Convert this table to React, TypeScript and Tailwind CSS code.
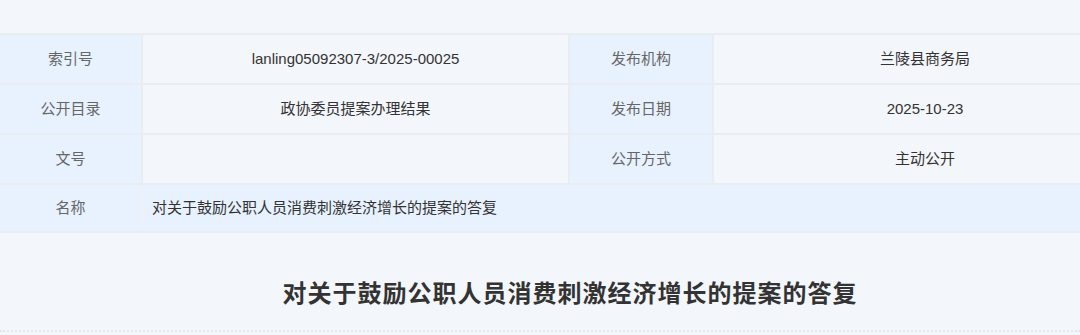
const font = "font-['Liberation_Sans','Noto_Sans_CJK_SC',sans-serif]"

type Cell = { label: string; value: string }

const rows: [Cell, Cell][] = [
  [
    { label: "索引号", value: "lanling05092307-3/2025-00025" },
    { label: "发布机构", value: "兰陵县商务局" },
  ],
  [
    { label: "公开目录", value: "政协委员提案办理结果" },
    { label: "发布日期", value: "2025-10-23" },
  ],
  [
    { label: "文号", value: "" },
    { label: "公开方式", value: "主动公开" },
  ],
]

export default function App() {
  const title = "对关于鼓励公职人员消费刺激经济增长的提案的答复"
  return (
    <div className={`w-[1080px] h-[335px] overflow-hidden bg-[#f3f6fa] pt-[33px] ${font}`}>
      {/* info table */}
      <div className="border-t-2 border-[#e9ecf0] text-[15px]">
        {rows.map(([a, b], i) => (
          <div
            key={i}
            className="grid grid-cols-[143px_427px_144px_1fr] h-[50px] border-b-2 border-[#e9ecf0]"
          >
            <div className="flex items-center justify-center bg-[#e8f2fe] text-[#666] border-r-2 border-[#e9ecf0]">
              {a.label}
            </div>
            <div className="flex items-center justify-center text-[#333] border-r-2 border-[#e9ecf0]">
              {a.value}
            </div>
            <div className="flex items-center justify-center bg-[#e8f2fe] text-[#666] border-r-2 border-[#e9ecf0]">
              {b.label}
            </div>
            <div className="flex items-center justify-center pl-[56px] text-[#333]">{b.value}</div>
          </div>
        ))}
        <div className="grid grid-cols-[143px_1fr] h-[48px] border-b-2 border-[#e9ecf0] bg-[#e8f2fe]">
          <div className="flex items-center justify-center text-[#666] py-[4px]">
            <span className="flex-1 text-center">名称</span>
            <span className="w-[2px] h-full bg-[#eef2f7]" />
          </div>
          <div className="flex items-center pl-[9px] text-[#333]">{title}</div>
        </div>
      </div>

      {/* heading */}
      <div className="h-[99px] border-b-2 border-dotted border-[#e3e6ea] flex items-center justify-center pt-[25px]">
        <h1 className="text-[24px] font-bold text-[#333] tracking-[1px] pl-[60px]">{title}</h1>
      </div>
    </div>
  )
}
